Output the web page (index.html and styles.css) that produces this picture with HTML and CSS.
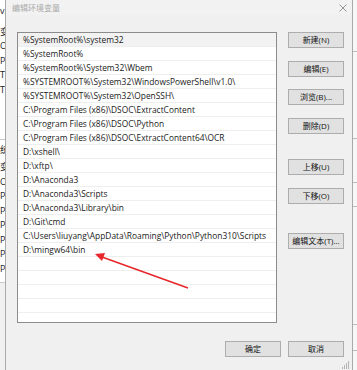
FILE: index.html
```html
<!DOCTYPE html>
<html lang="zh-CN">
<head>
    <meta charset="UTF-8">
    <meta name="viewport" content="width=device-width, initial-scale=1.0">
    <link rel="stylesheet" href="styles.css">
    <title>编辑环境变量</title>
</head>
<body>
    <div class="screen">
        <!-- edge of the window behind the dialog -->
        <div class="behind behindLeft">
            <div class="bRow" style="height:4px"></div>
            <div class="bRow">v2</div>
            <div class="bRow gap">变</div>
            <div class="bRow">O</div>
            <div class="bRow">Pa</div>
            <div class="bRow">TE</div>
            <div class="bRow">TM</div>
            <div class="bLine" style="height:42px"></div>
            <div class="bRow big">统</div>
            <div class="bRow">变</div>
            <div class="bRow">O</div>
            <div class="bRow">Pa</div>
            <div class="bRow">PA</div>
            <div class="bRow">PF</div>
            <div class="bRow">PF</div>
            <div class="bRow">PF</div>
            <div class="bRow">PF</div>
            <div class="bBottom"></div>
        </div>

        <div class="dialog">
            <div class="titleBar">
                <span class="title">编辑环境变量</span>
                <svg class="closeIcon" width="8" height="8" viewBox="0 0 8 8">
                    <path d="M0.5 0.5 L7.5 7.5 M7.5 0.5 L0.5 7.5" stroke="#8a8a8a" stroke-width="0.9" fill="none"/>
                </svg>
            </div>
            <div class="dialogBody">
                <div class="mainRow">
                    <div class="pathList">
                        <div class="pathItem selected">%SystemRoot%\system32</div>
                        <div class="pathItem">%SystemRoot%</div>
                        <div class="pathItem">%SystemRoot%\System32\Wbem</div>
                        <div class="pathItem">%SYSTEMROOT%\System32\WindowsPowerShell\v1.0\</div>
                        <div class="pathItem">%SYSTEMROOT%\System32\OpenSSH\</div>
                        <div class="pathItem">C:\Program Files (x86)\DSOC\ExtractContent</div>
                        <div class="pathItem">C:\Program Files (x86)\DSOC\Python</div>
                        <div class="pathItem">C:\Program Files (x86)\DSOC\ExtractContent64\OCR</div>
                        <div class="pathItem">D:\xshell\</div>
                        <div class="pathItem">D:\xftp\</div>
                        <div class="pathItem">D:\Anaconda3</div>
                        <div class="pathItem">D:\Anaconda3\Scripts</div>
                        <div class="pathItem">D:\Anaconda3\Library\bin</div>
                        <div class="pathItem">D:\Git\cmd</div>
                        <div class="pathItem">C:\Users\liuyang\AppData\Roaming\Python\Python310\Scripts</div>
                        <div class="pathItem">D:\mingw64\bin</div>
                        <div class="pathItem"></div>
                        <div class="pathItem"></div>
                        <div class="pathItem"></div>
                        <div class="pathItem"></div>
                    </div>
                    <div class="sideButtons">
                        <button class="winBtn">新建(N)</button>
                        <button class="winBtn">编辑(E)</button>
                        <button class="winBtn">浏览(B)...</button>
                        <button class="winBtn">删除(D)</button>
                        <button class="winBtn moveUp">上移(U)</button>
                        <button class="winBtn">下移(O)</button>
                        <button class="winBtn editText">编辑文本(T)...</button>
                    </div>
                </div>
                <div class="footer">
                    <button class="winBtn">确定</button>
                    <button class="winBtn">取消</button>
                </div>
            </div>
            <svg class="grip" width="8" height="8" viewBox="0 0 8 8">
                <rect x="6" y="0" width="1" height="8" fill="#b5b5b5"/>
                <rect x="4" y="2" width="1" height="6" fill="#b5b5b5"/>
                <rect x="2" y="4" width="1" height="4" fill="#b5b5b5"/>
                <rect x="0" y="6" width="1" height="2" fill="#b5b5b5"/>
            </svg>
        </div>

        <div class="behind behindRight">
            <div class="rLine" style="height:51px"></div>
            <div class="rLine" style="height:86px"></div>
            <div class="rLine" style="height:43px"></div>
            <div class="rLine" style="height:23px"></div>
            <div class="rLine" style="height:117px"></div>
            <div class="rLine" style="height:25px"></div>
        </div>

        <!-- red arrow drawn over the list -->
        <svg class="arrow" width="357" height="370" viewBox="0 0 357 370">
            <line x1="102" y1="257" x2="188" y2="288" stroke="#e8262b" stroke-width="1.6"/>
            <polygon points="95,254 105,253 102,261" fill="#e8262b"/>
        </svg>
    </div>
</body>
</html>
```

FILE: styles.css
```css
/* page */
html, body {
    margin: 0;
    padding: 0;
}
body {
    width: 357px;
    height: 370px;
    overflow: hidden;
    background: #f0f0f0;
    font-family: "Segoe UI", "Open Sans", "Noto Sans CJK SC", sans-serif;
}
.screen {
    position: relative;
    display: flex;
    flex-direction: row;
    width: 357px;
    height: 370px;
}

/* window behind the dialog */
.behind {
    background: #ffffff;
    overflow: hidden;
    display: flex;
    flex-direction: column;
}
.behindLeft {
    width: 5px;
}
.bRow {
    height: 14.5px;
    line-height: 14.5px;
    font-size: 9px;
    color: #222;
    white-space: nowrap;
    font-family: "Open Sans", "Noto Sans CJK SC", sans-serif;
}
.bRow.gap {
    margin-top: 6px;
}
.bRow.big {
    height: 20px;
    line-height: 20px;
}
.bLine {
    border-bottom: 1px solid #c9c9c9;
}
.bBottom {
    flex: 1;
    margin-top: 6px;
    border-top: 1px solid #c9c9c9;
    background: #f0f0f0;
}
.behindRight {
    width: 4px;
    background: #f7f7f7;
}
.rLine {
    border-bottom: 1px solid #bdbdbd;
    flex-shrink: 0;
}

/* dialog */
.dialog {
    position: relative;
    width: 346px;
    border-left: 1px solid #a9a9a9;
    border-right: 1px solid #a9a9a9;
    background: #f0f0f0;
    display: flex;
    flex-direction: column;
}
.titleBar {
    height: 15px;
    padding: 0 5px 0 6px;
    display: flex;
    align-items: center;
    justify-content: space-between;
    background: #f2f2f2;
}
.title {
    font-family: "Noto Sans CJK SC", sans-serif;
    font-size: 8px;
    color: #a8a8a8;
    line-height: 15px;
}
.closeIcon {
    display: block;
}
.dialogBody {
    padding: 17px 8px 0 11px;
}
.mainRow {
    display: flex;
    flex-direction: row;
}

/* list of paths */
.pathList {
    width: 258px;
    height: 289px;
    border: 1px solid #8c8c8c;
    background: #ffffff;
    overflow: hidden;
}
.pathItem {
    height: 13px;
    line-height: 13px;
    border-bottom: 1px solid #eeeeee;
    padding-left: 5px;
    font-size: 8.4px;
    color: #1a1a1a;
    white-space: nowrap;
}
.pathItem.selected {
    background: #f2f2f2;
}

/* buttons */
.sideButtons {
    margin-left: 11px;
    display: flex;
    flex-direction: column;
    gap: 12.6px;
}
.winBtn {
    width: 56px;
    height: 16px;
    padding: 0;
    margin: 0;
    border: 1px solid #adadad;
    background: #e1e1e1;
    color: #111;
    font-family: "Segoe UI", "Open Sans", "Noto Sans CJK SC", sans-serif;
    font-size: 8px;
    line-height: 14px;
    text-align: center;
}
.moveUp {
    margin-top: 13px;
}
.editText {
    margin-top: 16px;
}
.footer {
    margin-top: 18px;
    display: flex;
    justify-content: flex-end;
    gap: 7px;
}

.grip {
    position: absolute;
    right: 2px;
    bottom: 1px;
}
.arrow {
    position: absolute;
    left: 0;
    top: 0;
    pointer-events: none;
}
```
